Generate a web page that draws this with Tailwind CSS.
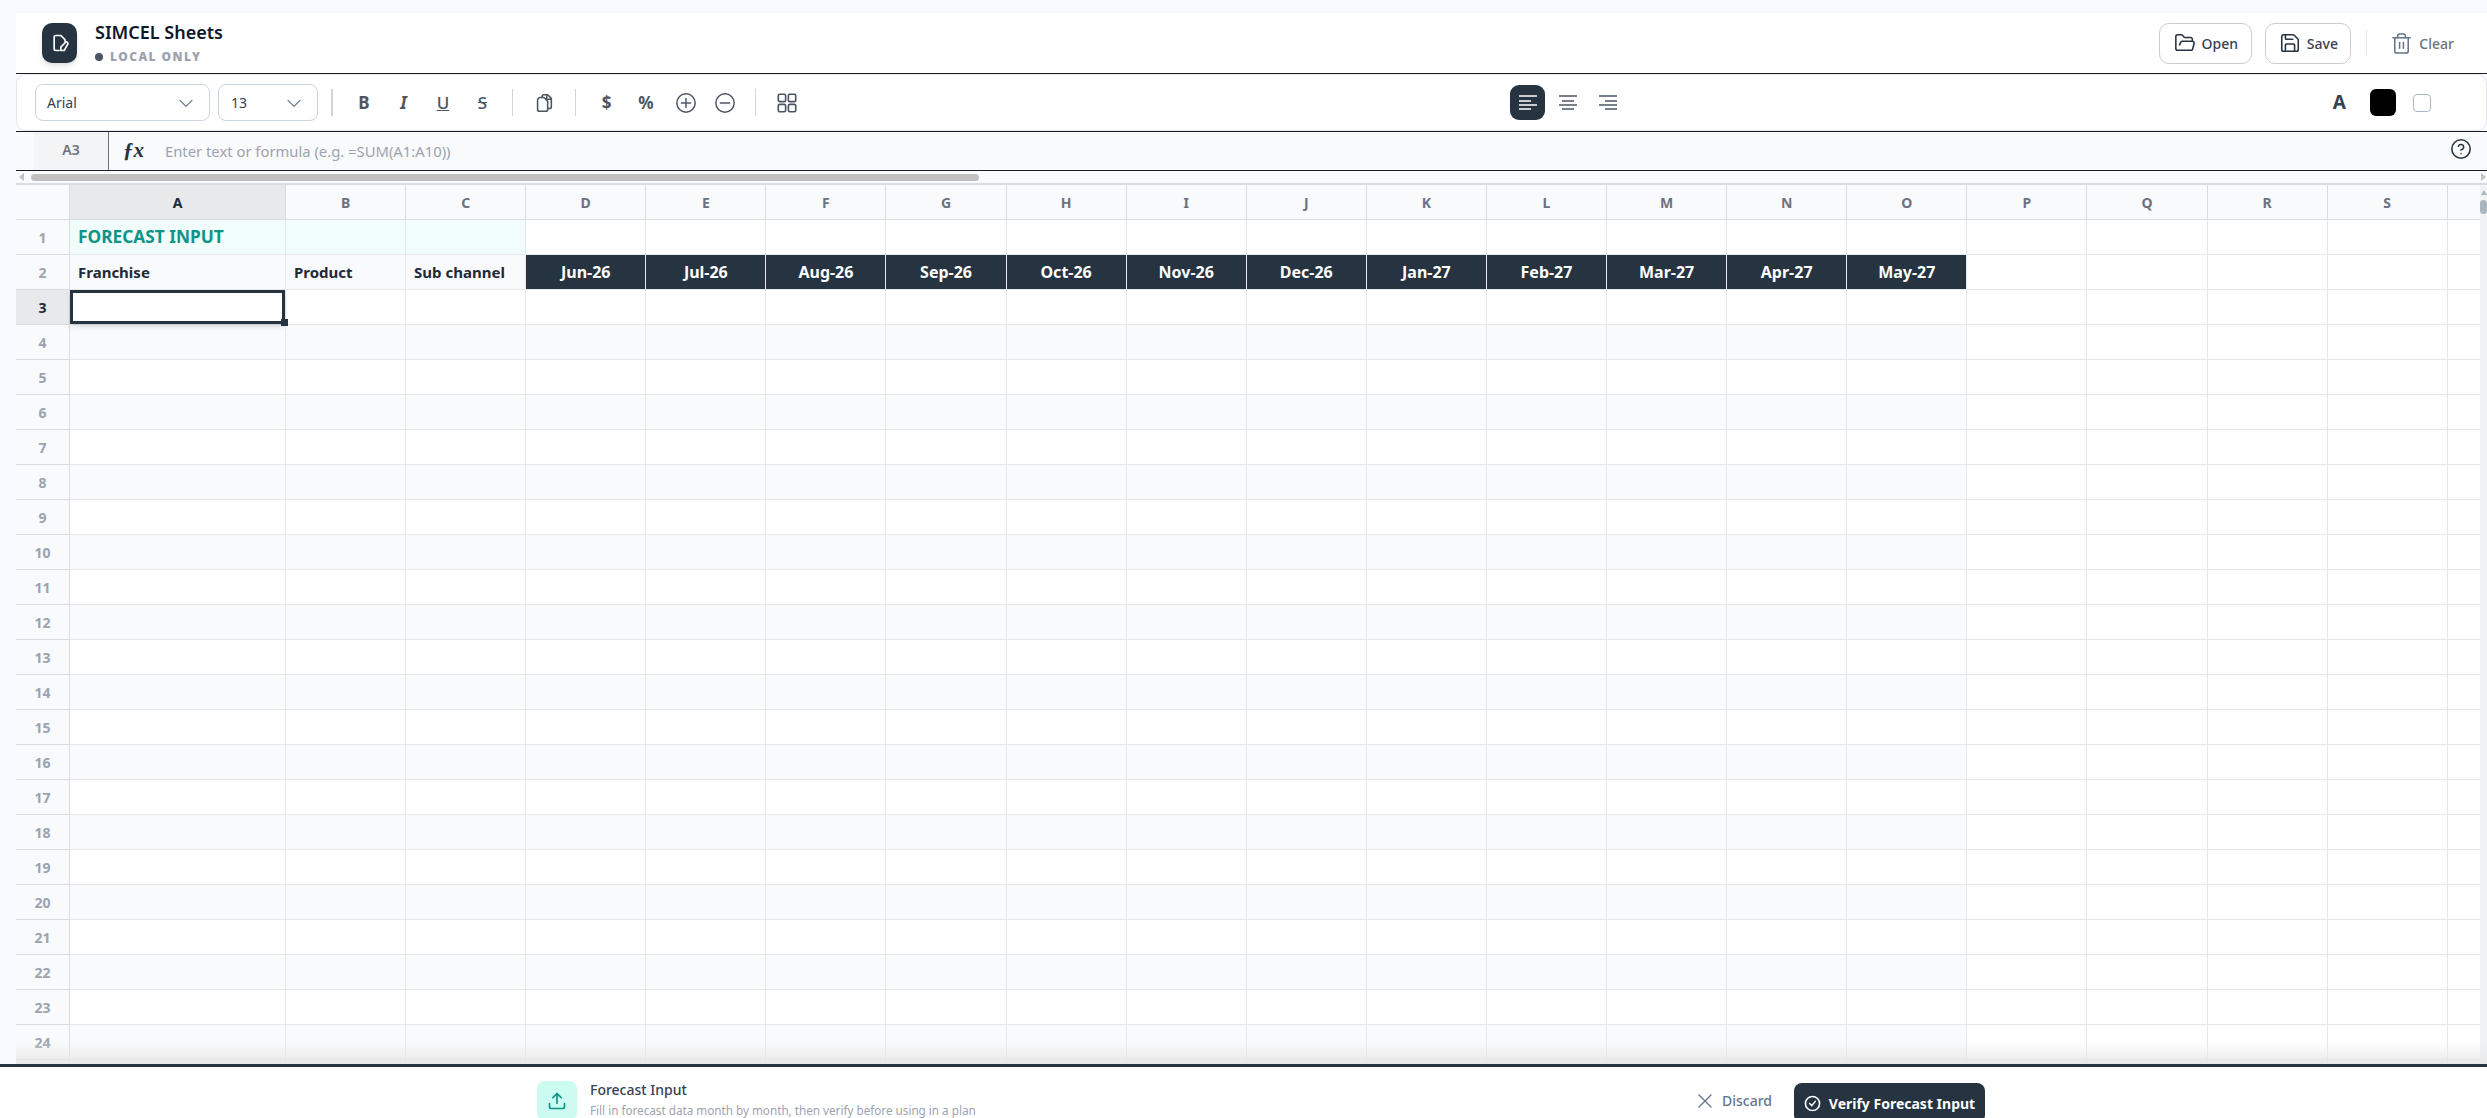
<!DOCTYPE html>
<html lang="en">
<head>
    <meta charset="UTF-8">
    <meta name="viewport" content="width=device-width, initial-scale=1.0">
    <title>SIMCEL Sheets</title>
    <script src="https://cdn.jsdelivr.net/npm/@tailwindcss/browser@4"></script>
</head>
<body class="h-[1118px] overflow-hidden bg-[#f9faff] font-['Noto_Sans',sans-serif] text-[#1f2937]">
    <div class="pt-[13px] pl-4">
        <!-- top header -->
        <header class="h-[61px] bg-white border-b border-[#1a1f26] flex items-center pl-[26px] pr-[33px]">
            <div class="w-[35px] h-10 rounded-[10px] bg-[#263340] shadow-md flex items-center justify-center">
                <svg class="w-[20px] h-[20px] text-white" viewBox="0 0 24 24" fill="none" stroke="currentColor" stroke-width="2" stroke-linecap="round" stroke-linejoin="round">
                    <path d="M11 21H7a2 2 0 0 1-2-2V5a2 2 0 0 1 2-2h6l5 5v2"/>
                    <path d="M21 14a1.8 1.8 0 0 0-2.6-2.6L13 17v4h4z"/>
                </svg>
            </div>
            <div class="ml-[18px]">
                <h1 class="text-[18px] leading-[24px] font-semibold text-[#0f172a]">SIMCEL Sheets</h1>
                <p class="mt-[4px] flex items-center gap-[7px] text-[12px] leading-[18px] font-black tracking-[0.12em] text-[#9ca3af]"><span class="w-2 h-2 rounded-full bg-[#4b5563]"></span>LOCAL ONLY</p>
            </div>
            <div class="ml-auto flex items-center">
                <button class="w-[93px] h-[41px] border border-[#c9ccd1] rounded-[10px] flex items-center justify-center gap-[6px] text-[14px] font-medium text-[#374151]">
                    <svg class="w-[22px] h-[22px] text-[#263340]" viewBox="0 0 24 24" fill="none" stroke="currentColor" stroke-width="1.7" stroke-linecap="round" stroke-linejoin="round"><path d="M6 14l1.5-3A2 2 0 0 1 9.2 10H20a2 2 0 0 1 1.9 2.5l-1.5 6A2 2 0 0 1 18.5 20H4a2 2 0 0 1-2-2V5a2 2 0 0 1 2-2h3.9a2 2 0 0 1 1.7.9l.8 1.2a2 2 0 0 0 1.7.9H18a2 2 0 0 1 2 2v2"/></svg>
                    Open
                </button>
                <button class="ml-[13px] w-[86px] h-[41px] border border-[#c9ccd1] rounded-[10px] flex items-center justify-center gap-[6px] text-[14px] font-medium text-[#374151]">
                    <svg class="w-[22px] h-[22px] text-[#263340]" viewBox="0 0 24 24" fill="none" stroke="currentColor" stroke-width="1.7" stroke-linecap="round" stroke-linejoin="round"><path d="M15.2 3a2 2 0 0 1 1.4.6l3.8 3.8a2 2 0 0 1 .6 1.4V19a2 2 0 0 1-2 2H5a2 2 0 0 1-2-2V5a2 2 0 0 1 2-2z"/><path d="M17 21v-7a1 1 0 0 0-1-1H8a1 1 0 0 0-1 1v7"/><path d="M7 3v4a1 1 0 0 0 1 1h7"/></svg>
                    Save
                </button>
                <div class="ml-[15px] w-px h-[26px] bg-[#e5e7eb]"></div>
                <button class="ml-[23px] flex items-center gap-[6px] text-[14px] font-medium text-[#6b7280]">
                    <svg class="w-[23px] h-[23px] text-[#64748b]" viewBox="0 0 24 24" fill="none" stroke="currentColor" stroke-width="1.6" stroke-linecap="round" stroke-linejoin="round"><path d="M3 6h18"/><path d="M19 6v14a2 2 0 0 1-2 2H7a2 2 0 0 1-2-2V6"/><path d="M8 6V4a2 2 0 0 1 2-2h4a2 2 0 0 1 2 2v2"/><path d="M10 11v6"/><path d="M14 11v6"/></svg>
                    Clear
                </button>
            </div>
        </header>

        <!-- toolbar -->
        <div class="h-[57px] bg-white border border-[#e5e7eb] rounded-[10px] flex items-center pl-[18px] relative">
            <div class="w-[175px] h-[37px] border border-[#cbd5e1] rounded-[8px] flex items-center justify-between pl-[11px] pr-[15px] text-[14px] text-[#374151]">Arial
                <svg class="w-[16px] h-[16px] text-[#64748b]" viewBox="0 0 24 24" fill="none" stroke="currentColor" stroke-width="1.8" stroke-linecap="round" stroke-linejoin="round"><path d="M3 8l9 9 9-9"/></svg>
            </div>
            <div class="ml-2 w-[100px] h-[37px] border border-[#cbd5e1] rounded-[8px] flex items-center justify-between pl-[12px] pr-[15px] text-[14px] text-[#374151]">13
                <svg class="w-[16px] h-[16px] text-[#64748b]" viewBox="0 0 24 24" fill="none" stroke="currentColor" stroke-width="1.8" stroke-linecap="round" stroke-linejoin="round"><path d="M3 8l9 9 9-9"/></svg>
            </div>
            <div class="ml-[13px] w-[2px] h-[27px] bg-[#d1d5db]"></div>
            <div class="ml-[15px] flex items-center gap-[7.5px] text-[#4b5563]">
                <span class="w-8 h-8 flex items-center justify-center font-bold text-[17px]">B</span>
                <span class="w-8 h-8 flex items-center justify-center font-bold italic text-[17px]">I</span>
                <span class="w-8 h-8 flex items-center justify-center font-medium underline text-[17px]">U</span>
                <span class="w-8 h-8 flex items-center justify-center font-medium line-through text-[17px]">S</span>
            </div>
            <div class="ml-[13px] w-px h-[27px] bg-[#d1d5db]"></div>
            <div class="ml-[15px] w-8 h-8 flex items-center justify-center text-[#4b5563]">
                <svg class="w-[22px] h-[22px]" viewBox="0 0 24 24" fill="none" stroke="currentColor" stroke-width="1.7" stroke-linecap="round" stroke-linejoin="round"><path d="M10 6V5a2 2 0 0 1 2-2h4l4 4v9a2 2 0 0 1-2 2h-2"/><path d="M15 3v5h5"/><path d="M8 6h4l4 4v9a2 2 0 0 1-2 2H7a2 2 0 0 1-2-2V9a3 3 0 0 1 3-3z"/></svg>
            </div>
            <div class="ml-[15px] w-px h-[27px] bg-[#d1d5db]"></div>
            <div class="ml-[15px] flex items-center gap-[7.5px] text-[#4b5563]">
                <span class="w-8 h-8 flex items-center justify-center font-bold text-[17px]">$</span>
                <span class="w-8 h-8 flex items-center justify-center font-bold text-[17px]">%</span>
                <span class="w-8 h-8 flex items-center justify-center">
                    <svg class="w-[22px] h-[22px]" viewBox="0 0 24 24" fill="none" stroke="currentColor" stroke-width="1.6" stroke-linecap="round"><circle cx="12" cy="12" r="10"/><path d="M12 7v10M7 12h10"/></svg>
                </span>
                <span class="w-8 h-8 flex items-center justify-center">
                    <svg class="w-[22px] h-[22px]" viewBox="0 0 24 24" fill="none" stroke="currentColor" stroke-width="1.6" stroke-linecap="round"><circle cx="12" cy="12" r="10"/><path d="M7 12h10"/></svg>
                </span>
            </div>
            <div class="ml-[14px] w-px h-[27px] bg-[#d1d5db]"></div>
            <div class="ml-[15px] w-8 h-8 flex items-center justify-center text-[#4b5563]">
                <svg class="w-[22px] h-[22px]" viewBox="0 0 24 24" fill="none" stroke="currentColor" stroke-width="1.8" stroke-linejoin="round"><rect x="2.5" y="2.5" width="8" height="8" rx="1.5"/><rect x="13.5" y="2.5" width="8" height="8" rx="1.5"/><rect x="2.5" y="13.5" width="8" height="8" rx="1.5"/><rect x="13.5" y="13.5" width="8" height="8" rx="1.5"/></svg>
            </div>
            <div class="ml-[707px] flex items-center gap-[5px]">
                <span class="w-[35px] h-[35px] rounded-[9px] bg-[#263340] flex items-center justify-center text-white">
                    <svg class="w-5 h-5" viewBox="0 0 20 20" fill="none" stroke="currentColor" stroke-width="1.5"><path d="M1 3h18M1 8h12M1 12h18M1 16h12"/></svg>
                </span>
                <span class="w-[35px] h-[35px] flex items-center justify-center text-[#4b5563]">
                    <svg class="w-5 h-5" viewBox="0 0 20 20" fill="none" stroke="currentColor" stroke-width="1.5"><path d="M1 3h18M4 8h12M1 12h18M4 16h12"/></svg>
                </span>
                <span class="w-[35px] h-[35px] flex items-center justify-center text-[#4b5563]">
                    <svg class="w-5 h-5" viewBox="0 0 20 20" fill="none" stroke="currentColor" stroke-width="1.5"><path d="M1 3h18M7 8h12M1 12h18M7 16h12"/></svg>
                </span>
            </div>
            <div class="ml-auto pr-[55px] flex items-center">
                <span class="text-[19px] font-bold text-[#374151] leading-none mb-[1px]">A</span>
                <span class="ml-[24px] w-[26px] h-[27px] rounded-[6px] bg-black"></span>
                <span class="ml-[17px] w-[18px] h-[18px] rounded-[4px] bg-white border border-[#a9b6c6]"></span>
            </div>
        </div>

        <!-- formula bar -->
        <div class="h-[40px] bg-[#f9fafb] border-y border-[#1a1f26] flex items-stretch pl-[18px]">
            <div class="w-[75px] bg-[#f3f4f6] border-r border-[#6b7280] flex items-center justify-center text-[14px] font-semibold text-[#6b7280] pb-[3px]">A3</div>
            <span class="ml-[14px] flex items-center font-['Liberation_Serif',serif] font-bold italic text-[21px] text-[#263340]">&#402;x</span>
            <span class="ml-[21px] flex items-center text-[14.8px] text-[#9ca3af]">Enter text or formula (e.g. =SUM(A1:A10))</span>
            <svg class="ml-auto mr-[15px] mt-[6px] w-[22px] h-[22px] text-[#263340]" viewBox="0 0 24 24" fill="none" stroke="currentColor" stroke-width="1.7" stroke-linecap="round" stroke-linejoin="round"><circle cx="12" cy="12" r="10"/><path d="M9.1 9a3 3 0 0 1 5.8 1c0 2-3 3-3 3"/><path d="M12 17h.01"/></svg>
        </div>

        <!-- horizontal scrollbar -->
        <div class="h-[12px] bg-[#f9fafb] flex items-center pl-[3px]">
            <span class="w-0 h-0 border-y-[4px] border-y-transparent border-r-[5px] border-r-[#c1c1c1]"></span>
            <span class="ml-[7px] w-[948px] h-[7px] rounded-full bg-[#c1c1c1]"></span>
            <span class="ml-auto mr-[1px] w-0 h-0 border-y-[4px] border-y-transparent border-l-[5px] border-l-[#c1c1c1]"></span>
        </div>

        <!-- sheet -->
        <div class="relative h-[881px] overflow-hidden border-t-2 border-[#d8dbe0] bg-white">
            <div id="sheet" class="grid grid-cols-[54px_216px_repeat(19,120.1px)] auto-rows-[35px] w-max"></div>
            <!-- selection box on A3 -->
            <div class="absolute left-[54px] top-[105px] w-[215px] h-[34px] border-[3px] border-[#263340] shadow-md">
                <span class="absolute -right-[6px] -bottom-[5px] w-[7px] h-[7px] bg-[#263340]"></span>
            </div>
            <!-- vertical scrollbar -->
            <div class="absolute right-0 top-0 bottom-0 w-[7px] bg-[#f1f2f4] flex flex-col items-center">
                <span class="mt-[5px] w-0 h-0 border-x-[3px] border-x-transparent border-b-[5px] border-b-[#aab5c0]"></span>
                <span class="mt-[5px] w-full h-[14px] rounded-full bg-[#aab5c0]"></span>
            </div>
            <!-- fade above the action bar -->
            <div class="absolute left-0 right-0 bottom-0 h-[22px] bg-gradient-to-b from-transparent to-[#e8e8e8]"></div>
        </div>
    </div>

    <!-- action bar -->
    <div class="fixed left-0 right-0 top-[1064px] h-[54px] bg-white border-t-[3px] border-[#263340] overflow-hidden">
        <div class="absolute left-[537px] top-[14px] w-10 h-10 rounded-[8px] bg-[#ccfbf1] flex items-center justify-center text-[#0d9488]">
            <svg class="w-5 h-5" viewBox="0 0 24 24" fill="none" stroke="currentColor" stroke-width="2" stroke-linecap="round" stroke-linejoin="round"><path d="M21 15v4a2 2 0 0 1-2 2H5a2 2 0 0 1-2-2v-4"/><path d="M17 8l-5-5-5 5"/><path d="M12 3v12"/></svg>
        </div>
        <div class="absolute left-[590px] top-[13px]">
            <p class="text-[14px] leading-[20px] font-medium text-[#374151]">Forecast Input</p>
            <p class="mt-[2px] text-[11.7px] leading-[16px] text-[#9ca3af]">Fill in forecast data month by month, then verify before using in a plan</p>
        </div>
        <button class="absolute left-[1697px] top-[23px] flex items-center gap-[9px] text-[14px] font-medium text-[#64748b]">
            <svg class="w-4 h-4" viewBox="0 0 24 24" fill="none" stroke="currentColor" stroke-width="2" stroke-linecap="round"><path d="M3 3l18 18M21 3L3 21"/></svg>
            Discard
        </button>
        <button class="absolute left-[1794px] top-[16px] w-[191px] h-10 rounded-[8px] bg-[#263340] text-white flex items-center justify-center gap-[8px] text-[14px] font-bold">
            <svg class="w-[17px] h-[17px]" viewBox="0 0 24 24" fill="none" stroke="currentColor" stroke-width="2.2" stroke-linecap="round" stroke-linejoin="round"><circle cx="12" cy="12" r="10"/><path d="M8 12l3 3 5-6"/></svg>
            Verify Forecast Input
        </button>
    </div>

    <script>
        // the sheet is just rows and columns, build it here
        var months = ['Jun-26','Jul-26','Aug-26','Sep-26','Oct-26','Nov-26','Dec-26','Jan-27','Feb-27','Mar-27','Apr-27','May-27'];
        var letters = 'ABCDEFGHIJKLMNOPQRST';
        var base = 'border-r border-b flex items-center ';
        var html = '';

        html += '<div class="' + base + 'border-[#d8dbe0] bg-[#f9fafb]"></div>';
        for (var c = 0; c < 20; c++) {
            var colClass = c == 0 ? 'bg-[#e8e9eb] text-[#1f2937]' : 'bg-[#f9fafb] text-[#6b7280]';
            var label = c < 19 ? letters[c] : '';
            html += '<div class="' + base + 'justify-center border-[#d8dbe0] text-[14px] font-bold ' + colClass + '">' + label + '</div>';
        }

        for (var r = 1; r <= 25; r++) {
            var rowClass = r == 3 ? 'bg-[#e8e9eb] text-[#1f2937]' : 'bg-[#f9fafb] text-[#9ca3af]';
            html += '<div class="' + base + 'justify-center border-[#d8dbe0] text-[14px] font-bold ' + rowClass + '">' + (r < 25 ? r : '') + '</div>';
            for (var c = 0; c < 20; c++) {
                var cls = base + 'border-[#e5e7eb] ';
                var text = '';
                if (r == 1 && c < 3) {
                    cls += 'bg-[#f0fdfa] px-2 text-[17.3px] font-bold text-[#0d9488] whitespace-nowrap';
                    if (c == 0) text = 'FORECAST INPUT';
                } else if (r == 2 && c < 3) {
                    cls += 'bg-[#f9fafb] px-2 text-[15px] font-bold text-[#1f2937] whitespace-nowrap';
                    text = ['Franchise', 'Product', 'Sub channel'][c];
                } else if (r == 2 && c < 15) {
                    cls += 'bg-[#263340] justify-center text-[16px] font-bold text-white';
                    text = months[c - 3];
                } else if (r % 2 == 0 && c < 15) {
                    cls += 'bg-[#f9fafb]';
                } else {
                    cls += 'bg-white';
                }
                html += '<div class="' + cls + '">' + text + '</div>';
            }
        }
        document.getElementById('sheet').innerHTML = html;
    </script>
</body>
</html>
